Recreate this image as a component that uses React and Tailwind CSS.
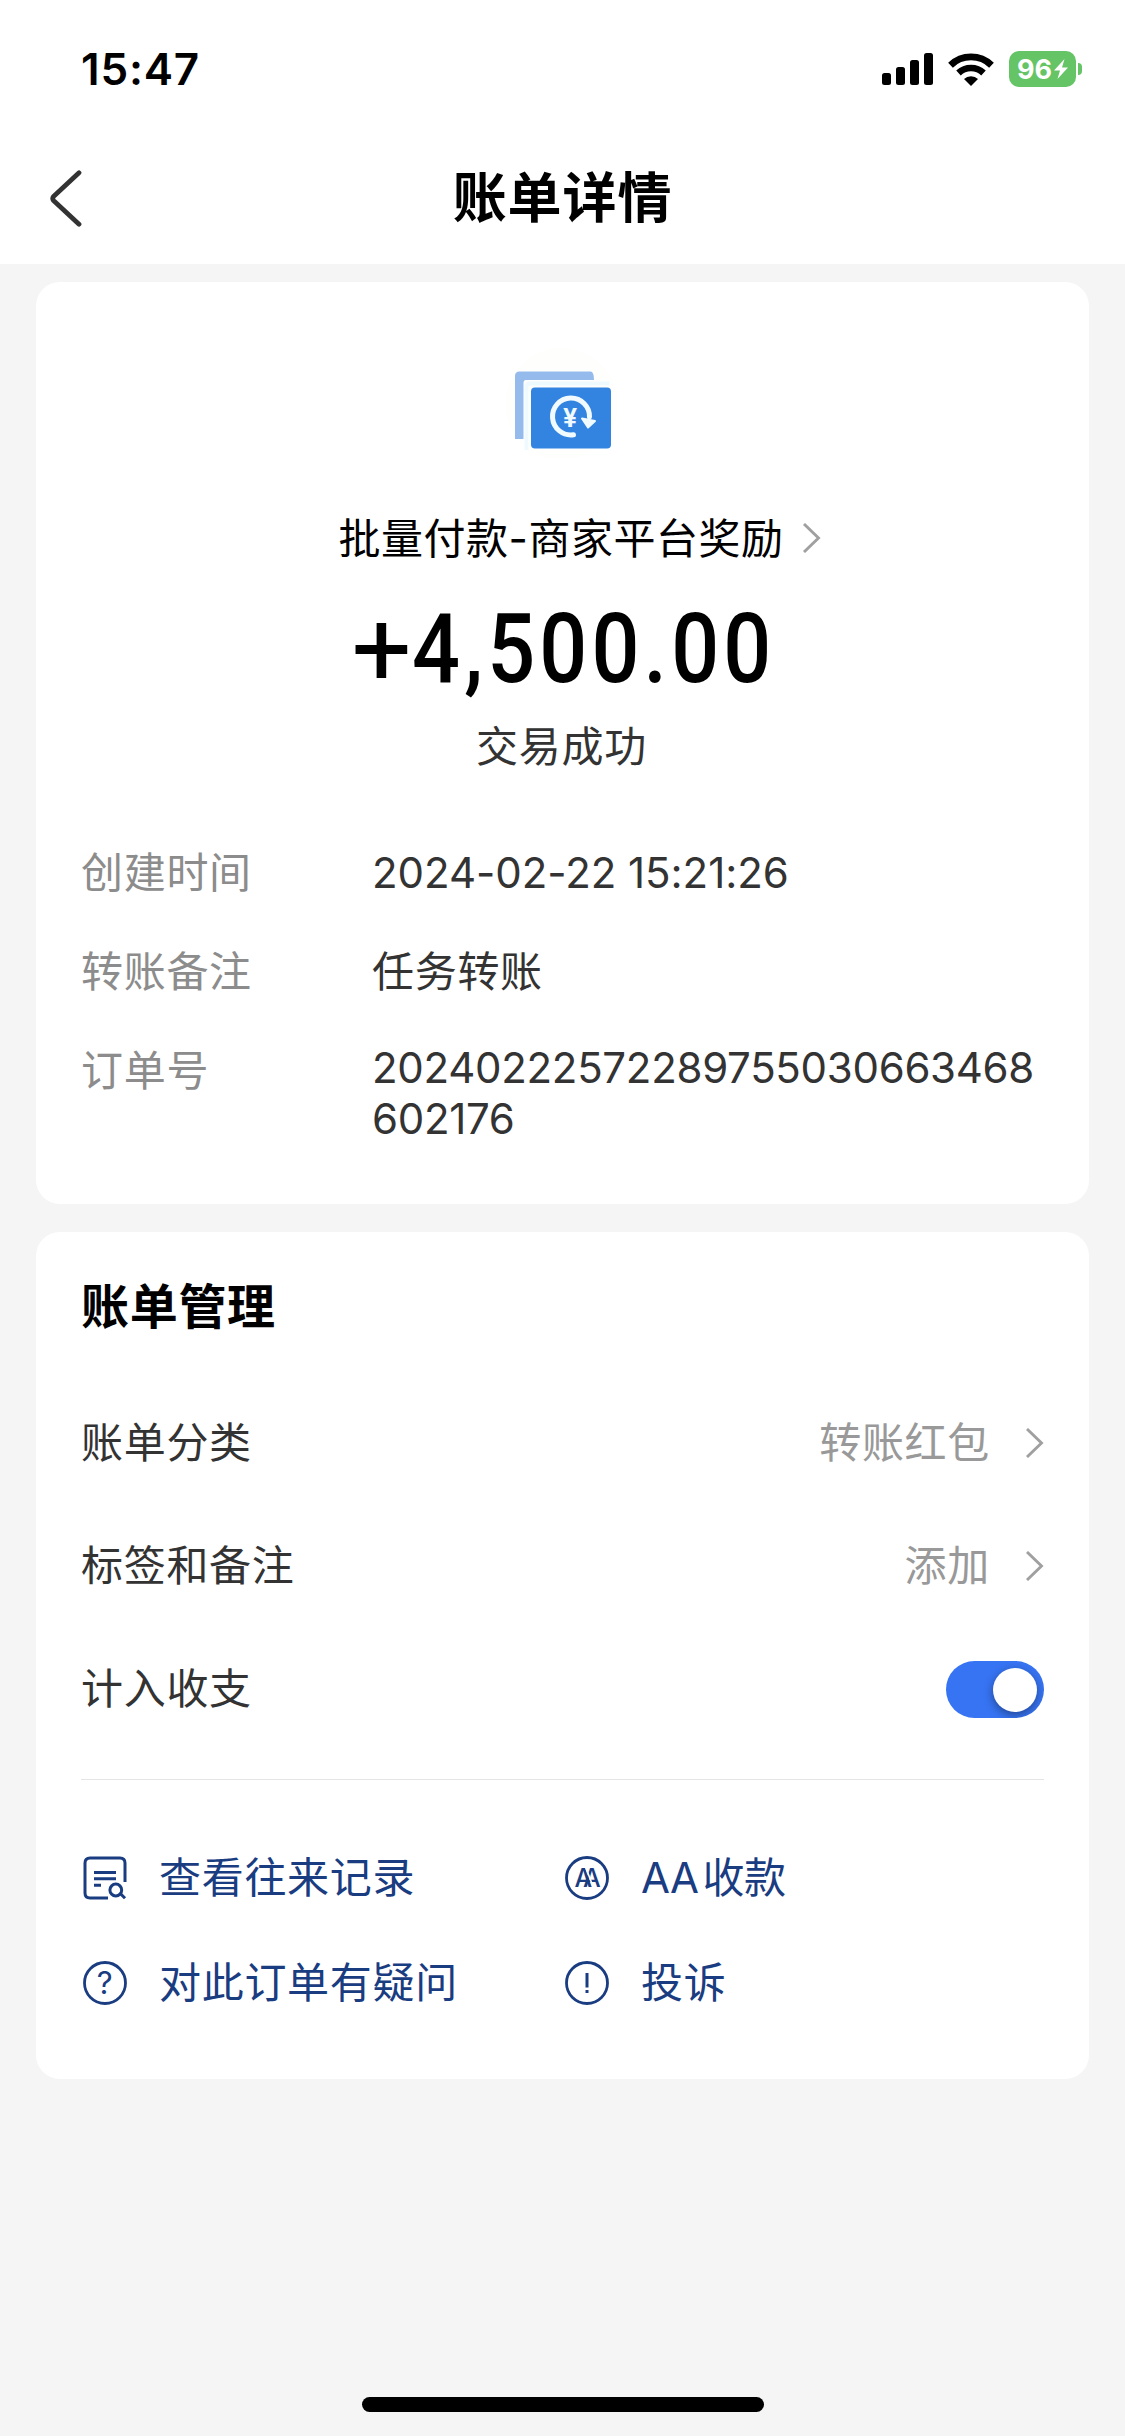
import React, { useState } from 'react';

const details = [
  { label: '创建时间', value: '2024-02-22 15:21:26' },
  { label: '转账备注', value: '任务转账', className: 'tracking-[0.7px]' },
  { label: '订单号', value: '20240222572289755030663468602176', className: '-mt-[3px] break-all tracking-[-0.3px]' },
];

const settings = [
  { label: '账单分类', value: '转账红包' },
  { label: '标签和备注', value: '添加' },
];

const SignalIcon = () => (
  <svg className="w-[51px] h-8" viewBox="0 0 51 32">
    <rect x="0" y="20" width="9" height="12" rx="2.5" />
    <rect x="14" y="14" width="9" height="18" rx="2.5" />
    <rect x="28" y="7" width="9" height="25" rx="2.5" />
    <rect x="42" y="0" width="9" height="32" rx="2.5" />
  </svg>
);

const WifiIcon = () => (
  <svg className="w-[46px] h-[33px]" viewBox="0 0 46 33" fill="none" stroke="#000">
    <path d="M2.5 12.2 A29.5 29.5 0 0 1 43.5 12.2" strokeWidth="6.8" />
    <path d="M10.5 20 A18.2 18.2 0 0 1 35.5 20" strokeWidth="6.6" />
    <path d="M16 26 A10 10 0 0 1 30 26 L23 33 Z" fill="#000" stroke="none" />
  </svg>
);

const Chevron = ({ className = '' }) => (
  <svg className={`w-[18px] h-[30px] shrink-0 ${className}`} viewBox="0 0 18 30" fill="none" stroke="#a0a0a0" strokeWidth="2.9">
    <path d="M1 1 L15.5 15 L1 29" />
  </svg>
);

const PaymentLogo = () => (
  <svg className="w-[114px] h-28" viewBox="506.5 346 114 112" fill="none">
    <circle cx="562" cy="404" r="56" fill="#fefefc" />
    <path d="M515.5 439 V376 Q515.5 371.5 520 371.5 H591 Q594.5 371.5 594.5 380 H526 Q524 380 524 382.5 V439 Z" fill="#94bbec" />
    <path d="M527 450 V387 Q527 383.5 531 383.5 H610" stroke="#effaff" strokeWidth="4" />
    <rect x="531.5" y="387.5" width="80" height="61" rx="4" fill="#3384e1" />
    <path d="M574 434.8 A18.5 18.5 0 1 1 590 417" stroke="#f1fbff" strokeWidth="5" strokeLinecap="round" />
    <path d="M582.5 418.5 L595.5 421 L588.5 427.5 Z" fill="#f1fbff" stroke="#f1fbff" strokeWidth="2" strokeLinejoin="round" />
    <text x="571" y="427" textAnchor="middle" fontFamily="Inter, sans-serif" fontWeight="700" fontSize="25" fill="#f1fbff">¥</text>
  </svg>
);

const iconClass = 'w-[44px] h-[44px] shrink-0 ml-0.5';

const RecordIcon = () => (
  <svg className={iconClass} viewBox="0 0 44 44" fill="none" stroke="#1a3c81" strokeWidth="3">
    <path d="M25 42 H7 Q2 42 2 37 V7 Q2 2 7 2 H37 Q42 2 42 7 V26" />
    <path d="M11 16.5 H33 M11 22.8 H33 M11 29.3 H18" />
    <circle cx="32.8" cy="34" r="5.9" />
    <path d="M37.3 37.5 L42 42.3" />
  </svg>
);

const AAIcon = () => (
  <svg className={iconClass} viewBox="0 0 44 44" fill="none">
    <circle cx="22" cy="22" r="20.5" stroke="#1a3c81" strokeWidth="2.8" />
    <text x="9.5" y="30.5" fontFamily="Inter, sans-serif" fontSize="25" fontWeight="500" letterSpacing="-9.5" fill="#1a3c81">AA</text>
    <path d="M20.6 11 L28.6 32" stroke="#fff" strokeWidth="1.6" />
  </svg>
);

const QuestionIcon = () => (
  <svg className={iconClass} viewBox="0 0 44 44" fill="none">
    <circle cx="22" cy="22" r="20.5" stroke="#1a3c81" strokeWidth="2.8" />
    <text x="22" y="33" textAnchor="middle" fontFamily="Inter, sans-serif" fontSize="31" fill="#1a3c81">?</text>
  </svg>
);

const AlertIcon = () => (
  <svg className={iconClass} viewBox="0 0 44 44" fill="none" stroke="#1a3c81">
    <circle cx="22" cy="22" r="20.5" strokeWidth="2.8" />
    <path d="M22 12 V26.5 M22 29 V32" strokeWidth="3" />
  </svg>
);

const links = [
  { text: '查看往来记录', Icon: RecordIcon },
  { text: 'AA 收款', Icon: AAIcon, className: 'tracking-[-0.6px] [word-spacing:-7px]' },
  { text: '对此订单有疑问', Icon: QuestionIcon },
  { text: '投诉', Icon: AlertIcon },
];

const Header = () => (
  <header className="h-[264px] bg-white">
    {/* Status bar */}
    <div className="h-[138px] pl-[81px] pr-[43px] flex items-center justify-between tracking-normal">
      <span className="text-[44px] font-semibold leading-none tracking-[0.8px] text-black">15:47</span>
      <div className="flex items-center gap-[15px]">
        <SignalIcon />
        <WifiIcon />
        <div className="flex items-center gap-[2px]">
          <div className="w-[67px] h-9 rounded-[10px] bg-[#65c466] flex items-center justify-center gap-[2px] text-white">
            <span className="text-[27px] font-bold leading-none">96</span>
            <svg className="w-[14px] h-[20px]" viewBox="0 0 14 20" fill="currentColor">
              <path d="M10.5 0 L0 11.5 H6 L3.5 20 L14 8.5 H8 Z" />
            </svg>
          </div>
          <div className="w-1 h-3 rounded-r-full bg-[#65c466]" />
        </div>
      </div>
    </div>

    {/* Navigation */}
    <div className="relative h-[122px] flex items-center justify-center">
      <button className="absolute left-[50px] top-8" aria-label="返回">
        <svg className="w-8 h-[57px]" viewBox="0 0 32 57" fill="none" stroke="#333" strokeWidth="4.8" strokeLinecap="round" strokeLinejoin="round">
          <path d="M29 2.8 L3.5 26.5 Q2 28.5 3.5 30.5 L29 54.2" />
        </svg>
      </button>
      <h1 className="text-[54px] font-bold leading-none tracking-[0.9px] text-black">账单详情</h1>
    </div>
  </header>
);

const App = () => {
  const [included, setIncluded] = useState(true);

  return (
    <div className="w-[1125px] h-[2436px] flex flex-col bg-[#f5f5f5] text-[42px] leading-[51px] tracking-[0.7px] text-[#333] font-['Inter','Noto_Sans_CJK_SC',sans-serif]">
      <Header />

      <main className="flex-1 px-9 pt-[18px]">
        {/* Transaction */}
        <section className="rounded-3xl bg-white px-[45px] pt-16 pb-[60px]">
          <div className="flex flex-col items-center">
            <PaymentLogo />
            <div className="mt-[50px] h-[60px] pl-[35px] flex items-center tracking-[0.5px] text-black">
              <span>批量付款-商家平台奖励</span>
              <Chevron className="ml-5" />
            </div>
            <div className="mt-[31px] h-[100px] pr-[5px] flex items-center font-[Roboto] text-[97px] font-medium leading-none tracking-normal text-black">
              <span className="text-[106px] font-normal">+</span>
              <span className="w-[357px] origin-left scale-x-[0.87] whitespace-nowrap tracking-[4.8px]">4,500.00</span>
            </div>
            <div className="mt-[22px] h-[50px] pr-[2px]">交易成功</div>
          </div>

          <dl className="mt-[76px] flex flex-col gap-12">
            {details.map(({ label, value, className = 'tracking-[-0.05px]' }) => (
              <div key={label} className="flex">
                <dt className="w-[291px] shrink-0 text-[#8c8c8c]">{label}</dt>
                <dd className={`flex-1 ${className}`}>{value}</dd>
              </div>
            ))}
          </dl>
        </section>

        {/* Bill management */}
        <section className="mt-7 rounded-3xl bg-white px-[45px] pt-[45px] pb-11">
          <h2 className="text-[48px] leading-[60px] font-bold text-black">账单管理</h2>
          <div className="mt-[44px]">
            {settings.map(({ label, value }) => (
              <div key={label} className="h-[123px] flex items-center justify-between">
                <span>{label}</span>
                <div className="flex items-center gap-9 text-[#999]">
                  <span>{value}</span>
                  <Chevron />
                </div>
              </div>
            ))}
            <div className="h-[123px] flex items-center justify-between">
              <span>计入收支</span>
              <button
                role="switch"
                aria-checked={included}
                aria-label="计入收支"
                onClick={() => setIncluded(!included)}
                className={`mt-[2px] w-[98px] h-[57px] px-[7px] rounded-full flex items-center overflow-hidden ${
                  included ? 'bg-[#3774f3] justify-end' : 'bg-gray-300 justify-start'
                }`}
              >
                <span className="size-11 rounded-full bg-white shadow-[0_3px_10px_rgba(0,0,0,0.4)]" />
              </button>
            </div>
          </div>

          <div className="mt-[29px] border-t border-[#e5e5e5]" />

          <div className="mt-[45px] grid grid-cols-[482px_1fr] text-[#1a3c81]">
            {links.map(({ text, Icon, className }) => (
              <a key={text} className="h-[105px] flex items-center gap-8">
                <Icon />
                <span className={className}>{text}</span>
              </a>
            ))}
          </div>
        </section>
      </main>

      {/* Home indicator */}
      <div className="mb-6 h-[15px] w-[402px] self-center rounded-full bg-black" />
    </div>
  );
};

export default App;
